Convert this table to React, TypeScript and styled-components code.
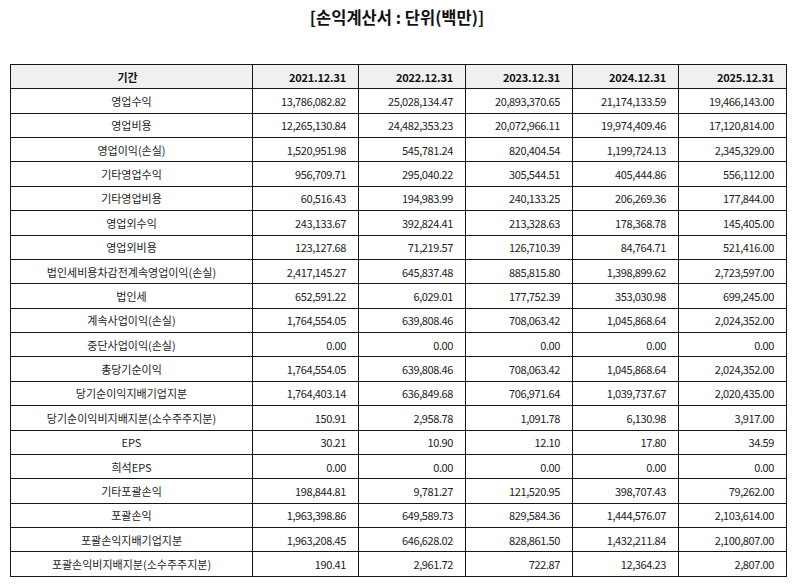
import React from "react";
import styled, { createGlobalStyle } from "styled-components";

const GlobalStyle = createGlobalStyle`
  html, body {
    margin: 0;
    padding: 0;
    background: #ffffff;
    font-family: "Noto Sans CJK KR", "Noto Sans", sans-serif;
    color: #111;
  }
`;

const Page = styled.div`
  width: 794px;
  display: flex;
  flex-direction: column;
  align-items: flex-start;
`;

const Title = styled.h1`
  align-self: stretch;
  margin: 7px 0 0 0;
  height: 20px;
  line-height: 20px;
  font-size: 16.5px;
  font-weight: 700;
  text-align: center;
  color: #111;
`;

const Table = styled.table`
  margin: 37px 0 0 10px;
  width: 776px;
  table-layout: fixed;
  border-collapse: collapse;
  font-size: 11px;
  line-height: 14px;
`;

const HeadCell = styled.th<{ $align: "center" | "right" }>`
  height: 23.3px;
  padding: 0 12px 0 4px;
  border: 1px solid #161616;
  background: #f0f0f0;
  font-weight: 700;
  text-align: ${(p) => p.$align};
  letter-spacing: ${(p) => (p.$align === "right" ? "-0.2px" : "0")};
  white-space: nowrap;
  color: #111;
`;

const Cell = styled.td<{ $align: "center" | "right" }>`
  height: 23.38px;
  padding: ${(p) => (p.$align === "center" ? "0 2px" : "0 12px 0 4px")};
  border: 1px solid #161616;
  text-align: ${(p) => p.$align};
  letter-spacing: ${(p) => (p.$align === "right" ? "-0.4px" : "0")};
  white-space: nowrap;
  color: #222;
`;

const headers = ["2021.12.31", "2022.12.31", "2023.12.31", "2024.12.31", "2025.12.31"];
const widths = [242, 106, 107, 107, 106, 108];

const rows: [string, string[]][] = [
  ["영업수익", ["13,786,082.82", "25,028,134.47", "20,893,370.65", "21,174,133.59", "19,466,143.00"]],
  ["영업비용", ["12,265,130.84", "24,482,353.23", "20,072,966.11", "19,974,409.46", "17,120,814.00"]],
  ["영업이익(손실)", ["1,520,951.98", "545,781.24", "820,404.54", "1,199,724.13", "2,345,329.00"]],
  ["기타영업수익", ["956,709.71", "295,040.22", "305,544.51", "405,444.86", "556,112.00"]],
  ["기타영업비용", ["60,516.43", "194,983.99", "240,133.25", "206,269.36", "177,844.00"]],
  ["영업외수익", ["243,133.67", "392,824.41", "213,328.63", "178,368.78", "145,405.00"]],
  ["영업외비용", ["123,127.68", "71,219.57", "126,710.39", "84,764.71", "521,416.00"]],
  ["법인세비용차감전계속영업이익(손실)", ["2,417,145.27", "645,837.48", "885,815.80", "1,398,899.62", "2,723,597.00"]],
  ["법인세", ["652,591.22", "6,029.01", "177,752.39", "353,030.98", "699,245.00"]],
  ["계속사업이익(손실)", ["1,764,554.05", "639,808.46", "708,063.42", "1,045,868.64", "2,024,352.00"]],
  ["중단사업이익(손실)", ["0.00", "0.00", "0.00", "0.00", "0.00"]],
  ["총당기순이익", ["1,764,554.05", "639,808.46", "708,063.42", "1,045,868.64", "2,024,352.00"]],
  ["당기순이익지배기업지분", ["1,764,403.14", "636,849.68", "706,971.64", "1,039,737.67", "2,020,435.00"]],
  ["당기순이익비지배지분(소수주주지분)", ["150.91", "2,958.78", "1,091.78", "6,130.98", "3,917.00"]],
  ["EPS", ["30.21", "10.90", "12.10", "17.80", "34.59"]],
  ["희석EPS", ["0.00", "0.00", "0.00", "0.00", "0.00"]],
  ["기타포괄손익", ["198,844.81", "9,781.27", "121,520.95", "398,707.43", "79,262.00"]],
  ["포괄손익", ["1,963,398.86", "649,589.73", "829,584.36", "1,444,576.07", "2,103,614.00"]],
  ["포괄손익지배기업지분", ["1,963,208.45", "646,628.02", "828,861.50", "1,432,211.84", "2,100,807.00"]],
  ["포괄손익비지배지분(소수주주지분)", ["190.41", "2,961.72", "722.87", "12,364.23", "2,807.00"]],
];

export default function App() {
  return (
    <Page>
      <GlobalStyle />
      <Title>[손익계산서 : 단위(백만)]</Title>
      <Table>
        <colgroup>
          {widths.map((w, i) => (
            <col key={i} style={{ width: w }} />
          ))}
        </colgroup>
        <thead>
          <tr>
            <HeadCell $align="center">기간</HeadCell>
            {headers.map((h) => (
              <HeadCell key={h} $align="right">
                {h}
              </HeadCell>
            ))}
          </tr>
        </thead>
        <tbody>
          {rows.map(([label, vals]) => (
            <tr key={label}>
              <Cell $align="center">{label}</Cell>
              {vals.map((v, i) => (
                <Cell key={i} $align="right">
                  {v}
                </Cell>
              ))}
            </tr>
          ))}
        </tbody>
      </Table>
    </Page>
  );
}
